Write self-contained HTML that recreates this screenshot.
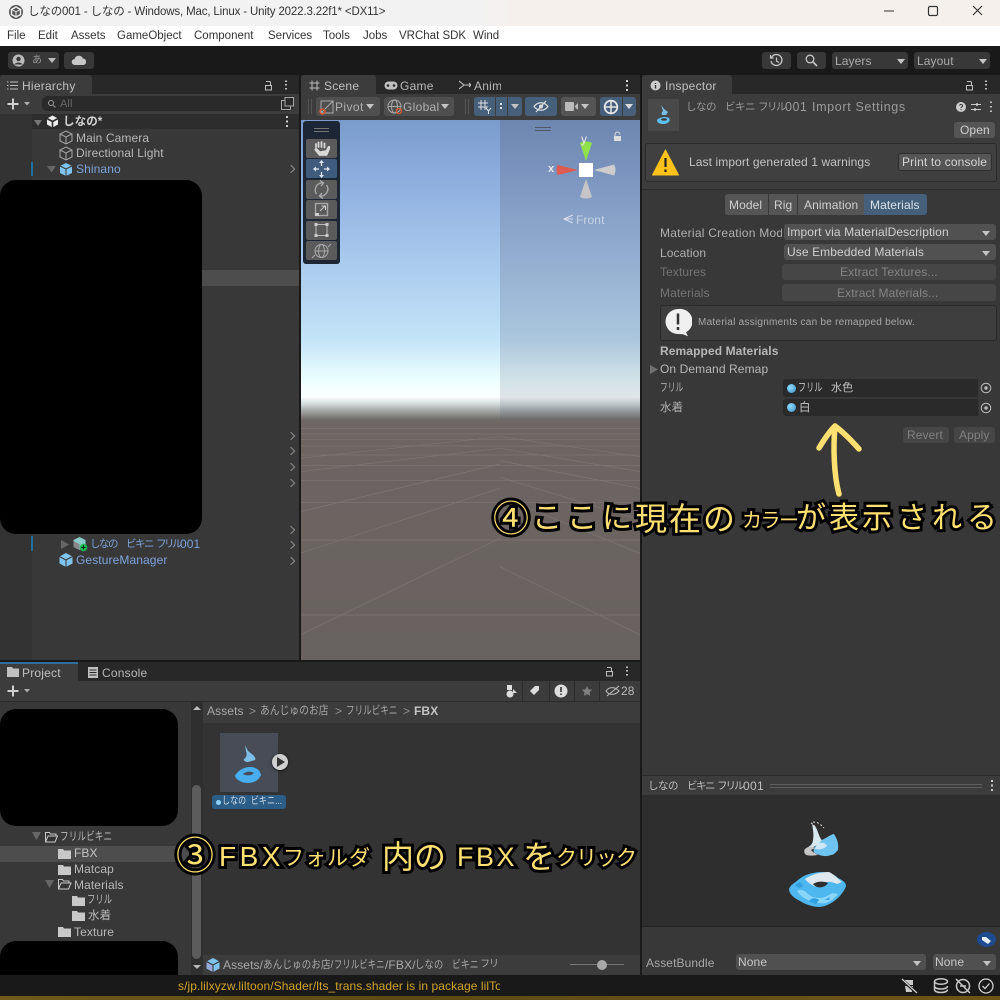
<!DOCTYPE html>
<html lang="ja"><head><meta charset="utf-8"><title>Unity</title>
<style>
html,body{margin:0;padding:0;background:#191919}
#r{position:relative;width:1000px;height:1000px;overflow:hidden;background:#191919;font-family:"Liberation Sans","Noto Sans CJK JP",sans-serif;font-size:12px;color:#c4c4c4}
#r div,#r span.t,#r svg.a{position:absolute}
.t{position:absolute;white-space:nowrap;line-height:16px;letter-spacing:.1px}
.n{transform-origin:0 50%}
.m{color:#333;font-size:11.5px;letter-spacing:0}
.b{background:#585858;border-radius:3px}
.tri{position:absolute;width:0;height:0;border-left:4px solid transparent;border-right:4px solid transparent;border-top:5px solid #c4c4c4}
.ann{position:absolute;white-space:nowrap;color:#ffe070;-webkit-text-stroke:6px #000;paint-order:stroke fill;stroke-linejoin:round;font-family:"Liberation Sans","Noto Sans CJK JP",sans-serif;line-height:40px}
.chev{position:absolute;left:288px;width:5px;height:5px;border-top:1.4px solid #8e8e8e;border-right:1.4px solid #8e8e8e;transform:rotate(45deg)}
.tool{position:absolute;left:306px;width:31px;height:19px;background:#5b5b5b;border-radius:2px}
</style></head><body><div id="r">

<!-- title bar -->
<div style="left:0;top:0;width:1000px;height:26px;background:linear-gradient(90deg,#f2f2f2 0,#f2f2f2 48%,#f6f0ec 52%,#f6f0ec 100%)"></div>
<svg class="a" style="left:8px;top:4px" width="16" height="16" viewBox="0 0 16 16"><circle cx="8" cy="8" r="7" fill="#555"/><path d="M8 3l4.500 2.500v5L8 13l-4.500-2.500v-5z" fill="none" stroke="#eee" stroke-width="1.500"/><path d="M8 8l4-2.500M8 8v5M8 8L4 5.500" stroke="#eee"/></svg>
<span class="t" style="left:28px;top:4px;color:#333;font-size:11.5px;letter-spacing:-.15px">しなの001 - しなの - Windows, Mac, Linux - Unity 2022.3.22f1* &lt;DX11&gt;</span>
<svg class="a" style="left:880px;top:0" width="120" height="24" viewBox="0 0 120 24"><path d="M4 11h10" stroke="#333" stroke-width="1"/><rect x="48.500" y="6.500" width="9" height="9" rx="1.500" fill="none" stroke="#333" stroke-width="1.200"/><path d="M93 6l9 9M102 6l-9 9" stroke="#333" stroke-width="1.200"/></svg>
<!-- menu bar -->
<div style="left:0;top:26px;width:1000px;height:20px;background:#fff"></div>
<span class="t m" style="left:7px;top:28px">File</span>
<span class="t m" style="left:38px;top:28px">Edit</span>
<span class="t m" style="left:71px;top:28px">Assets</span>
<span class="t m" style="left:117px;top:28px">GameObject</span>
<span class="t m" style="left:194px;top:28px">Component</span>
<span class="t m" style="left:268px;top:28px">Services</span>
<span class="t m" style="left:323px;top:28px">Tools</span>
<span class="t m" style="left:363px;top:28px">Jobs</span>
<span class="t m" style="left:399px;top:28px">VRChat SDK</span>
<span class="t m" style="left:473px;top:28px;width:27px;overflow:hidden">Wind</span>

<!-- toolbar -->
<div class="b" style="left:8px;top:52px;width:51px;height:17px;background:#383838"></div>
<svg class="a" style="left:12px;top:54px" width="13" height="13" viewBox="0 0 13 13"><circle cx="6.500" cy="6.500" r="6" fill="#bbb"/><circle cx="6.500" cy="5" r="2.200" fill="#383838"/><path d="M2.500 10.500c1-2.500 7-2.500 8 0" fill="#383838"/></svg>
<span class="t" style="left:32px;top:53px;font-size:10px;color:#999">あ</span>
<div class="tri" style="left:48px;top:58px;border-top-color:#bbb"></div>
<div class="b" style="left:64px;top:52px;width:30px;height:17px;background:#383838"></div>
<svg class="a" style="left:71px;top:54px" width="16" height="12" viewBox="0 0 16 12"><path d="M4 11a3 3 0 0 1-.5-6A4.500 4.500 0 0 1 12 4.500 3.300 3.300 0 0 1 12.500 11z" fill="#c8c8c8"/></svg>
<div class="b" style="left:762px;top:52px;width:29px;height:17px;background:#383838"></div>
<svg class="a" style="left:769px;top:53px" width="15" height="15" viewBox="0 0 15 15"><path d="M2.500 4.500A5.500 5.500 0 1 1 2 8" fill="none" stroke="#c8c8c8" stroke-width="1.300"/><path d="M1.500 2v3h3M7.500 4.500V8l2.500 1.500" fill="none" stroke="#c8c8c8" stroke-width="1.200"/></svg>
<div class="b" style="left:797px;top:52px;width:29px;height:17px;background:#383838"></div>
<svg class="a" style="left:805px;top:54px" width="13" height="13" viewBox="0 0 13 13"><circle cx="5" cy="5" r="3.800" fill="none" stroke="#c8c8c8" stroke-width="1.300"/><path d="M8 8l4 4" stroke="#c8c8c8" stroke-width="1.600"/></svg>
<div class="b" style="left:832px;top:52px;width:76px;height:17px;background:#383838"></div>
<span class="t" style="left:835px;top:53px;color:#aaa">Layers</span><div class="tri" style="left:897px;top:59px"></div>
<div class="b" style="left:914px;top:52px;width:76px;height:17px;background:#383838"></div>
<span class="t" style="left:917px;top:53px;color:#aaa">Layout</span><div class="tri" style="left:979px;top:59px"></div>

<!-- HIERARCHY -->
<div style="left:0;top:75px;width:299px;height:585px;background:#383838"></div>
<div style="left:0;top:75px;width:299px;height:19px;background:#282828;"></div>
<div style="left:0;top:75px;width:92px;height:19px;background:#3c3c3c;border-radius:3px 3px 0 0"></div>
<svg class="a" style="left:7px;top:81px" width="11" height="9" viewBox="0 0 11 9"><path d="M0 1h1.500M3 1h8M0 4.500h1.500M3 4.500h8M0 8h1.500M3 8h8" stroke="#bbb"/></svg>
<span class="t" style="left:22px;top:78px;color:#c0c0c0;letter-spacing:.25px">Hierarchy</span>
<svg class="a" style="left:263px;top:79px" width="30" height="12" viewBox="0 0 30 12"><path d="M3 2.500h3.500a1 1 0 0 1 1 1V6M2.500 6.500h6v4.500h-6z" fill="none" stroke="#c0c0c0"/><path d="M23 1.500v1.500M23 5v1.500M23 9v1.500" stroke="#c0c0c0" stroke-width="2"/></svg>
<div style="left:0;top:94px;width:299px;height:21px;background:#3c3c3c;border-bottom:1px solid #2a2a2a"></div>
<svg class="a" style="left:6px;top:97px" width="26" height="14" viewBox="0 0 26 14"><path d="M7 1.500v11M1.500 7h11" stroke="#d0d0d0" stroke-width="2"/><path d="M18 5h6l-3 3.500z" fill="#b0b0b0"/></svg>
<div style="left:42px;top:96px;width:252px;height:15px;background:#2a2a2a;border-radius:5px"></div>
<svg class="a" style="left:47px;top:99px" width="10" height="10" viewBox="0 0 10 10"><circle cx="4" cy="4" r="2.500" fill="none" stroke="#999"/><path d="M6 6l2.500 2.500" stroke="#999"/></svg>
<span class="t" style="left:60px;top:96px;font-size:11px;color:#666">All</span>
<svg class="a" style="left:281px;top:97px" width="13" height="13" viewBox="0 0 13 13"><rect x=".5" y="3.500" width="9" height="9" fill="none" stroke="#aaa"/><rect x="4" y=".5" width="8.500" height="8.500" fill="#2a2a2a" stroke="#aaa"/></svg>
<!-- scene row -->
<div style="left:32px;top:114px;width:267px;height:15px;background:#2d2d2d"></div>
<div style="left:0;top:114px;width:32px;height:546px;background:#333"></div>
<div style="left:202px;top:270px;width:97px;height:16px;background:#4d4d4d"></div>
<svg class="a" style="left:34px;top:119px" width="8" height="8" viewBox="0 0 8 8"><path d="M0 1h8L4 7z" fill="#777"/></svg>
<svg class="a" style="left:46px;top:115px" width="13" height="13" viewBox="0 0 13 13"><path d="M6.500 .5l5.500 3v6l-5.500 3-5.500-3v-6z" fill="#eee"/><path d="M6.500 6.500v6M6.500 6.500L1 3.500M6.500 6.500l5.500-3" stroke="#2d2d2d" stroke-width="1.600"/></svg>
<span class="t" style="left:63px;top:114px;color:#d4d4d4;font-weight:bold;font-size:11.5px">しなの*</span>
<svg class="a" style="left:285px;top:115px" width="4" height="13" viewBox="0 0 4 13"><path d="M2 1v2M2 5.500v2M2 10v2" stroke="#ccc" stroke-width="2"/></svg>
<svg class="a" style="left:59px;top:130px" width="14" height="46" viewBox="0 0 14 46"><g fill="none" stroke="#a8a8a8"><path d="M7 1l6 3v7l-6 3-6-3V4zM1 4l6 3 6-3M7 7v7"/><path d="M7 17l6 3v7l-6 3-6-3v-7zM1 20l6 3 6-3M7 23v7"/></g><path d="M7 33l6 3v7l-6 3-6-3v-7z" fill="#7fc4ee"/><path d="M1 36l6 3 6-3M7 39v7" stroke="#383838" fill="none"/></svg>
<span class="t" style="left:76px;top:130px;color:#b8b8b8">Main Camera</span>
<span class="t" style="left:76px;top:145px;color:#b8b8b8">Directional Light</span>
<div style="left:31px;top:162px;width:2px;height:14px;background:#1f6f9f"></div>
<svg class="a" style="left:47px;top:165px" width="9" height="8" viewBox="0 0 9 8"><path d="M0 1h9L4.500 7.500z" fill="#666"/></svg>
<span class="t" style="left:76px;top:161px;color:#7ba3dc">Shinano</span>
<div class="chev" style="top:166px"></div>
<div class="chev" style="top:433px"></div>
<div class="chev" style="top:448px"></div>
<div class="chev" style="top:464px"></div>
<div class="chev" style="top:480px"></div>
<div class="chev" style="top:527px"></div>
<div class="chev" style="top:542px"></div>
<div class="chev" style="top:558px"></div>
<div style="left:31px;top:536px;width:2px;height:15px;background:#1f6f9f"></div>
<svg class="a" style="left:61px;top:540px" width="8" height="9" viewBox="0 0 8 9"><path d="M0 0l8 4.500L0 9z" fill="#666"/></svg>
<svg class="a" style="left:73px;top:536px" width="15" height="16" viewBox="0 0 15 16"><path d="M6.500 1l6 3v7l-6 3-6-3V4z" fill="#8cc"/><path d="M.5 5l6 3v6l-6-3z" fill="#888"/><circle cx="10.500" cy="11.500" r="3.800" fill="#1db954"/><path d="M10.500 9.500v4M8.500 11.500h4" stroke="#111"/></svg>
<span class="t" style="left:90px;top:536px;color:#7ba3dc;font-size:10.500px;letter-spacing:-1.500px">しなの</span>
<span class="t" style="left:126px;top:536px;color:#7ba3dc;font-size:10.500px;letter-spacing:-1.500px">ビキニ</span>
<span class="t" style="left:156px;top:536px;color:#7ba3dc;font-size:10.500px;letter-spacing:-2.500px">フリル</span>
<span class="t" style="left:180px;top:536px;color:#7ba3dc">001</span>
<svg class="a" style="left:59px;top:552px" width="14" height="16" viewBox="0 0 14 16"><path d="M7 1l6.500 3.500v7L7 15 .5 11.500v-7z" fill="#7fc4ee"/><path d="M.5 4.500L7 8l6.500-3.500M7 8v7" stroke="#383838" fill="none"/></svg>
<span class="t" style="left:76px;top:552px;color:#7ba3dc">GestureManager</span>
<div style="left:0;top:180px;width:202px;height:354px;background:#000;border-radius:16px"></div>

<!-- SCENE -->
<div style="left:301px;top:75px;width:339px;height:19px;background:#282828"></div>
<div style="left:301px;top:75px;width:75px;height:19px;background:#3c3c3c;border-radius:3px 3px 0 0"></div>
<svg class="a" style="left:309px;top:80px" width="11" height="11" viewBox="0 0 11 11"><path d="M3 .5v10M8 .5v10M.5 3h10M.5 8h10" stroke="#bbb"/></svg>
<span class="t" style="left:324px;top:78px;color:#c0c0c0;letter-spacing:.25px">Scene</span>
<svg class="a" style="left:384px;top:81px" width="14" height="9" viewBox="0 0 14 9"><rect x=".5" y=".5" width="13" height="8" rx="4" fill="#c0c0c0"/><circle cx="4" cy="4.500" r="1.300" fill="#282828"/><circle cx="10" cy="4.500" r="1.300" fill="#282828"/></svg>
<span class="t" style="left:400px;top:78px;color:#b8b8b8;letter-spacing:.25px">Game</span>
<svg class="a" style="left:459px;top:80px" width="12" height="10" viewBox="0 0 12 10"><path d="M0 1l5 4-5 4M5 5h7M10 3l2 2-2 2" fill="none" stroke="#c0c0c0" stroke-width="1.100"/></svg>
<span class="t" style="left:474px;top:78px;color:#b8b8b8;letter-spacing:.25px;width:27px;overflow:hidden">Anim</span>
<svg class="a" style="left:625px;top:79px" width="4" height="13" viewBox="0 0 4 13"><path d="M2 1v2M2 5.500v2M2 10v2" stroke="#ccc" stroke-width="2"/></svg>
<div style="left:301px;top:94px;width:339px;height:26px;background:#3c3c3c"></div>
<div style="left:308px;top:99px;width:1px;height:15px;background:#555;box-shadow:3px 0 0 #555"></div>
<div style="left:316px;top:97px;width:64px;height:19px;background:#4f4f4f;border-radius:3px"></div>
<svg class="a" style="left:319px;top:99px" width="16" height="16" viewBox="0 0 16 16"><path d="M2 2h12v12H2zM2 14L14 2" fill="none" stroke="#aaa"/><circle cx="3.500" cy="12.500" r="2.500" fill="none" stroke="#e2572a" stroke-width="1.300"/></svg>
<span class="t" style="left:335px;top:99px;color:#b0b0b0;letter-spacing:.4px">Pivot</span><div class="tri" style="left:366px;top:104px"></div>
<div style="left:384px;top:97px;width:70px;height:19px;background:#4f4f4f;border-radius:3px"></div>
<svg class="a" style="left:387px;top:99px" width="16" height="16" viewBox="0 0 16 16"><g fill="none" stroke="#aaa"><circle cx="7.500" cy="7.500" r="6.500"/><ellipse cx="7.500" cy="7.500" rx="3" ry="6.500"/><path d="M1 7.500h13"/></g><circle cx="12" cy="12" r="2.500" fill="none" stroke="#e2572a" stroke-width="1.300"/></svg>
<span class="t" style="left:403px;top:99px;color:#b0b0b0;letter-spacing:.3px">Global</span><div class="tri" style="left:441px;top:104px"></div>
<div style="left:465px;top:99px;width:1px;height:15px;background:#555;box-shadow:3px 0 0 #555"></div>
<div style="left:474px;top:97px;width:21px;height:19px;background:#46607c;border-radius:3px 0 0 3px"></div>
<svg class="a" style="left:477px;top:99px" width="15" height="15" viewBox="0 0 15 15"><path d="M4 1v10M8 1v10M1 4h10M1 8h10M9 9l2.500 3L14 9M11.500 12v3" fill="none" stroke="#e0e0e0"/></svg>
<div style="left:496px;top:97px;width:11px;height:19px;background:#46607c"></div>
<div style="left:500px;top:103px;width:1.500px;height:1.500px;background:#ddd;box-shadow:0 4px 0 #ddd"></div>
<div style="left:508px;top:97px;width:14px;height:19px;background:#46607c;border-radius:0 3px 3px 0"></div><div class="tri" style="left:511px;top:104px"></div>
<div style="left:525px;top:97px;width:32px;height:19px;background:#46607c;border-radius:3px"></div>
<svg class="a" style="left:533px;top:100px" width="16" height="13" viewBox="0 0 16 13"><path d="M1 6.500c4-5 10-5 14 0-4 5-10 5-14 0z" fill="none" stroke="#ddd" stroke-width="1.200"/><circle cx="8" cy="6.500" r="2" fill="#ddd"/><path d="M3 12L13 1" stroke="#ddd" stroke-width="1.200"/></svg>
<div style="left:561px;top:97px;width:35px;height:19px;background:#555;border-radius:3px"></div>
<svg class="a" style="left:565px;top:102px" width="13" height="9" viewBox="0 0 13 9"><rect width="9" height="9" rx="1" fill="#bbb"/><path d="M9.500 4.500L13 1v7z" fill="#bbb"/></svg><div class="tri" style="left:581px;top:104px"></div>
<div style="left:600px;top:97px;width:22px;height:19px;background:#46607c;border-radius:3px 0 0 3px"></div>
<svg class="a" style="left:603px;top:99px" width="16" height="16" viewBox="0 0 16 16"><circle cx="8" cy="8" r="6.300" fill="none" stroke="#e6e6e6" stroke-width="1.800"/><path d="M1.500 8h13M8 1.500v13" stroke="#e6e6e6" stroke-width="1.500"/></svg>
<div style="left:623px;top:97px;width:13px;height:19px;background:#46607c;border-radius:0 3px 3px 0"></div><div class="tri" style="left:625px;top:104px;border-top-color:#ddd"></div>
<!-- viewport -->
<div style="left:301px;top:120px;width:339px;height:540px;background:linear-gradient(180deg,#7a9ccc 0,#8aabdc 50px,#a6c6ec 130px,#c4e4f8 220px,#ecffff 260px,#fbffff 277px,#d8e0e0 283px,#a8acab 290px,#6f6866 300px,#6d6562 320px,#686260 540px)"></div>
<div style="left:500px;top:120px;width:140px;height:300px;background:linear-gradient(180deg,rgba(70,70,90,.25),rgba(70,80,110,.2) 70%,rgba(70,80,100,.13))"></div>
<svg class="a" style="left:300px;top:340px" width="340" height="320" viewBox="0 0 1020 960"><g stroke="#7d7673" stroke-width="2" fill="none"><path d="M0 265H1020M0 282H1020M0 298H1020M0 318H1020M0 345H1020M0 376H1020M0 421H1020M0 488H1020M0 600H1020M0 825H1020"/><path d="M600 325L0 395M600 372L0 515M600 445L0 640M600 595L0 885M600 325L1020 395M600 362L1020 445M600 412L1020 540M600 680L1020 885M600 290L0 355M600 290L1020 350M600 470L1020 640"/></g></svg>
<!-- tools -->
<div style="left:303px;top:121px;width:37px;height:143px;background:#1d2635;border-radius:3px"></div>
<div style="left:314px;top:128px;width:15px;height:1px;background:#777;box-shadow:0 3px 0 #777"></div>
<div class="tool" style="top:139px;"></div><div class="tool" style="top:159px;background:#3f5b7d"></div><div class="tool" style="top:180px"></div><div class="tool" style="top:200px"></div><div class="tool" style="top:221px"></div><div class="tool" style="top:241px"></div>
<svg class="a" style="left:306px;top:139px" width="31" height="122" viewBox="0 0 31 122"><path d="M10 8V5M12.500 8V3.500M15.500 8V3M18.500 8.500V4.500M21 11L22.500 8c1-1 .8 1 .5 2l-2.500 6h-7l-4-5c-.5-1 .5-1.500 1.500-.5l2 2" fill="#d8d8d8" stroke="#d8d8d8" stroke-width="1.800" stroke-linecap="round" stroke-linejoin="round"/><g fill="none" stroke="#e8e8e8" stroke-width="1.200"><path d="M15.500 23v4M15.500 33v4M9 30h4M18 30h4"/></g><path d="M15.500 21l2.500 3h-5zM15.500 39l2.500-3h-5zM7 30l3-2.500v5zM24 30l-3-2.500v5z" fill="#dfe8f0"/><g fill="none" stroke="#a8a8a8" stroke-width="1.400"><path d="M10.500 55A7 7 0 0 1 17 44M14 41.500l3.500 2.500-2.500 3M20.500 46A7 7 0 0 1 14 57M17 59.500l-3.500-2.500 2.500-3"/><rect x="9.500" y="64.500" width="12" height="12"/></g><rect x="9" y="74" width="4" height="3" fill="#ccc"/><path d="M14 72l5-5M15.500 67H19.500v4" fill="none" stroke="#ccc"/><g fill="none" stroke="#bbb"><rect x="10" y="85.500" width="11" height="11"/></g><path d="M8.500 84h3v3h-3zM19.500 84h3v3h-3zM8.500 95h3v3h-3zM19.500 95h3v3h-3z" fill="#ccc"/><g fill="none" stroke="#aaa"><circle cx="15.500" cy="112" r="6.500"/><ellipse cx="15.500" cy="112" rx="3" ry="6.500"/><path d="M9 112h13"/><path d="M6 119l3-3M25 105l-3 3"/></g></svg>
<!-- gizmo -->
<svg class="a" style="left:530px;top:122px" width="100" height="20" viewBox="0 0 100 20"><path d="M5 5.500h16M5 8.500h16" stroke="#444" opacity=".7"/><rect x="84" y="14" width="7" height="5" fill="#ddd"/><path d="M85 14V12.500a2.500 2.500 0 0 1 5 0" fill="none" stroke="#ddd"/></svg>
<svg class="a" style="left:540px;top:130px" width="90" height="80" viewBox="0 0 90 80"><path d="M46 31L40 13c3-2 9-2 12 0z" fill="#8fe24b"/><path d="M46 49L52 67c-3 2-9 2-12 0z" fill="#c6c6c6"/><path d="M38 40L18 35c-2 3-2 7 0 10z" fill="#dd5b50"/><path d="M54 40L74 34.500c2 3 2 8 0 11z" fill="#cdcdcd"/><rect x="39" y="33" width="14" height="14" fill="#fff"/></svg>
<span class="t" style="left:581px;top:131px;color:#e8e8e8;font-size:12px">y</span>
<span class="t" style="left:548px;top:161px;color:#e8e8e8;font-size:11px;font-weight:bold">x</span>
<svg class="a" style="left:563px;top:214px" width="11" height="10" viewBox="0 0 11 10"><path d="M10 1L1 5l9 4M1 5h9" fill="none" stroke="#dde"/></svg>
<span class="t" style="left:576px;top:212px;color:#c6d4e6">Front</span>

<!-- INSPECTOR -->
<div style="left:642px;top:75px;width:358px;height:900px;background:#383838"></div>
<div style="left:642px;top:75px;width:358px;height:19px;background:#282828"></div>
<div style="left:642px;top:75px;width:90px;height:19px;background:#3c3c3c;border-radius:3px 3px 0 0"></div>
<svg class="a" style="left:650px;top:80px" width="11" height="11" viewBox="0 0 11 11"><circle cx="5.500" cy="5.500" r="5" fill="#ccc"/><path d="M5.500 3v1M5.500 5v3.500" stroke="#333" stroke-width="1.300"/></svg>
<span class="t" style="left:665px;top:78px;color:#c0c0c0;letter-spacing:.25px">Inspector</span>
<svg class="a" style="left:964px;top:79px" width="30" height="12" viewBox="0 0 30 12"><path d="M3 2.500h3.500a1 1 0 0 1 1 1V6M2.500 6.500h6v4.500h-6z" fill="none" stroke="#c0c0c0"/><path d="M22 1.500v1.500M22 5v1.500M22 9v1.500" stroke="#c0c0c0" stroke-width="2"/></svg>
<div style="left:642px;top:94px;width:358px;height:96px;background:#3c3c3c"></div>
<div style="left:648px;top:99px;width:31px;height:32px;background:#494949"></div>
<svg class="a" style="left:652px;top:103px" width="24" height="25" viewBox="0 0 24 25"><path d="M9 2l3 4 4 3-2 3h-4c-1-2 0-3 1-4z" fill="#78bde6"/><path d="M5 17c2-3 9-4 12-2 2 3-1 6-6 6-3 0-6-1-6-4z" fill="#5fbdf0"/><ellipse cx="12" cy="16.500" rx="3" ry="1.200" fill="#3c3c3c"/></svg>
<span class="t" style="left:686px;top:99px;color:#9a9a9a;font-size:10.500px;letter-spacing:-.5px">しなの</span>
<span class="t" style="left:725px;top:99px;color:#9a9a9a;font-size:10.500px;letter-spacing:-.5px">ビキニ</span>
<span class="t" style="left:758px;top:99px;color:#9a9a9a;font-size:10.500px;letter-spacing:-1.500px">フリル</span>
<span class="t" style="left:785px;top:99px;color:#9a9a9a;font-size:12.500px;letter-spacing:.5px">001</span>
<span class="t" style="left:812px;top:99px;color:#9a9a9a;font-size:12.500px;letter-spacing:.65px">Import Settings</span>
<svg class="a" style="left:955px;top:100px" width="41" height="14" viewBox="0 0 41 14"><circle cx="6" cy="7" r="5" fill="#ccc"/><path d="M4.500 5.500C5 4 8 4.200 7.500 6c-.3 1-1.500 1-1.500 2.300M6 9.300v1" fill="none" stroke="#333"/><path d="M16 4.500h10M16 9.500h10" stroke="#ccc"/><path d="M22 3v3M20 8v3" stroke="#ccc" stroke-width="1.500"/><path d="M36 1.500v1.500M36 6v1.500M36 10.500V12" stroke="#ccc" stroke-width="1.800"/></svg>
<div style="left:954px;top:122px;width:41px;height:16px;background:#555;border-radius:3px"></div>
<span class="t" style="left:960px;top:122px;color:#d0d0d0">Open</span>
<!-- warning -->
<div style="left:645px;top:143px;width:350px;height:37px;background:#404040;border:1px solid #2b2b2b;border-radius:3px"></div>
<svg class="a" style="left:652px;top:149px" width="27" height="27" viewBox="0 0 27 27"><path d="M13.500 1L26.500 26H.5z" fill="#fcc21b" stroke="#fcc21b" stroke-linejoin="round"/><path d="M13.500 9v9M13.500 20.500v2.500" stroke="#222" stroke-width="2.200"/></svg>
<span class="t" style="left:689px;top:154px;color:#c4c4c4">Last import generated 1 warnings</span>
<div style="left:899px;top:154px;width:92px;height:16px;background:#555;border-radius:2px;box-shadow:0 0 0 1px #2e2e2e"></div>
<span class="t" style="left:902px;top:154px;color:#d4d4d4;letter-spacing:.15px">Print to console</span>
<div style="left:642px;top:189px;width:358px;height:1px;background:#2d2d2d"></div>
<!-- tabs -->
<div style="left:725px;top:194px;width:43px;height:21px;background:#555;border-radius:3px 0 0 3px"></div>
<div style="left:769px;top:194px;width:28px;height:21px;background:#555"></div>
<div style="left:798px;top:194px;width:66px;height:21px;background:#555"></div>
<div style="left:864px;top:194px;width:63px;height:21px;background:#46607c;border-radius:0 3px 3px 0"></div>
<span class="t" style="left:729px;top:197px;color:#d0d0d0">Model</span>
<span class="t" style="left:774px;top:197px;color:#d0d0d0">Rig</span>
<span class="t" style="left:804px;top:197px;color:#d0d0d0">Animation</span>
<span class="t" style="left:870px;top:197px;color:#d8e0ea">Materials</span>
<!-- fields -->
<span class="t" style="left:660px;top:225px;color:#b0b0b0;width:122px;overflow:hidden;letter-spacing:.25px">Material Creation Mode</span>
<div class="b" style="left:784px;top:224px;width:212px;height:16px;background:#515151"></div>
<span class="t" style="left:787px;top:224px;color:#cfcfcf">Import via MaterialDescription</span><div class="tri" style="left:982px;top:231px"></div>
<span class="t" style="left:660px;top:245px;color:#b0b0b0">Location</span>
<div class="b" style="left:784px;top:244px;width:212px;height:16px;background:#515151"></div>
<span class="t" style="left:787px;top:244px;color:#cfcfcf">Use Embedded Materials</span><div class="tri" style="left:982px;top:251px"></div>
<span class="t" style="left:660px;top:264px;color:#747474">Textures</span>
<div class="b" style="left:782px;top:264px;width:214px;height:16px;background:#464646"></div>
<span class="t" style="left:840px;top:264px;color:#848484">Extract Textures...</span>
<span class="t" style="left:660px;top:285px;color:#747474">Materials</span>
<div class="b" style="left:782px;top:284px;width:214px;height:17px;background:#464646"></div>
<span class="t" style="left:837px;top:285px;color:#848484">Extract Materials...</span>
<div style="left:660px;top:305px;width:335px;height:34px;background:#3e3e3e;border:1px solid #2a2a2a;border-radius:3px"></div>
<svg class="a" style="left:665px;top:308px" width="27" height="29" viewBox="0 0 27 29"><path d="M13 1a12.500 12.500 0 1 0 0 25l5 .3 5 2-2-4A12.500 12.500 0 0 0 13 1z" fill="#f0f0f0"/><path d="M13 5.500v11M13 19v3" stroke="#333" stroke-width="2.500"/></svg>
<span class="t" style="left:698px;top:315px;color:#a8a8a8;font-size:10px;letter-spacing:.25px">Material assignments can be remapped below.</span>
<span class="t" style="left:660px;top:343px;color:#b8b8b8;font-weight:bold;font-size:12px;letter-spacing:.1px">Remapped Materials</span>
<svg class="a" style="left:650px;top:365px" width="8" height="9" viewBox="0 0 8 9"><path d="M0 0l8 4.500L0 9z" fill="#707070"/></svg>
<span class="t" style="left:660px;top:361px;color:#b8b8b8">On Demand Remap</span>
<span class="t n" style="left:660px;top:380px;color:#b0b0b0;font-size:11.500px;transform:scaleX(.67)">フリル</span>
<div style="left:783px;top:379px;width:213px;height:18px;background:#2a2a2a;border-radius:3px"></div>
<div style="left:978px;top:379px;width:18px;height:18px;background:#383838;border-radius:0 3px 3px 0"></div>
<div style="left:787px;top:384px;width:9px;height:9px;border-radius:50%;background:radial-gradient(circle at 35% 35%,#8fdcff,#3a8fc8)"></div>
<span class="t n" style="left:798px;top:380px;color:#c4c4c4;font-size:11.500px;transform:scaleX(.7)">フリル</span>
<span class="t" style="left:831px;top:380px;color:#c4c4c4;font-size:11px">水色</span>
<svg class="a" style="left:980px;top:382px" width="12" height="12" viewBox="0 0 12 12"><circle cx="6" cy="6" r="4.800" fill="none" stroke="#bbb"/><circle cx="6" cy="6" r="1.700" fill="#bbb"/></svg>
<span class="t" style="left:660px;top:400px;color:#b0b0b0;font-size:11.500px">水着</span>
<div style="left:783px;top:399px;width:213px;height:17px;background:#2a2a2a;border-radius:3px"></div>
<div style="left:978px;top:399px;width:18px;height:17px;background:#383838;border-radius:0 3px 3px 0"></div>
<div style="left:787px;top:403px;width:9px;height:9px;border-radius:50%;background:radial-gradient(circle at 35% 35%,#8fdcff,#3a8fc8)"></div>
<span class="t" style="left:799px;top:400px;color:#c4c4c4;font-size:11.500px">白</span>
<svg class="a" style="left:980px;top:402px" width="12" height="12" viewBox="0 0 12 12"><circle cx="6" cy="6" r="4.800" fill="none" stroke="#bbb"/><circle cx="6" cy="6" r="1.700" fill="#bbb"/></svg>
<div class="b" style="left:903px;top:427px;width:46px;height:16px;background:#464646"></div>
<span class="t" style="left:907px;top:427px;color:#808080">Revert</span>
<div class="b" style="left:954px;top:427px;width:41px;height:16px;background:#464646"></div>
<span class="t" style="left:959px;top:427px;color:#808080">Apply</span>
<!-- preview -->
<div style="left:642px;top:775px;width:358px;height:1px;background:#2a2a2a"></div>
<div style="left:642px;top:776px;width:358px;height:19px;background:#3c3c3c"></div>
<span class="t" style="left:648px;top:778px;color:#bebebe;font-size:10.500px;letter-spacing:-.5px">しなの</span>
<span class="t" style="left:687px;top:778px;color:#bebebe;font-size:10.500px;letter-spacing:-1.500px">ビキニ</span>
<span class="t" style="left:717px;top:778px;color:#bebebe;font-size:10.500px;letter-spacing:-2px">フリル</span>
<span class="t" style="left:743px;top:778px;color:#bebebe;letter-spacing:.3px">001</span>
<div style="left:770px;top:784px;width:212px;height:1px;background:#5e5e5e;box-shadow:0 3px 0 #5e5e5e"></div>
<svg class="a" style="left:990px;top:779px" width="4" height="13" viewBox="0 0 4 13"><path d="M2 1v2M2 5.500v2M2 10v2" stroke="#ccc" stroke-width="2"/></svg>
<div style="left:642px;top:795px;width:358px;height:131px;background:#2e2e2e;border-bottom:1px solid #232323"></div>
<svg class="a" style="left:785px;top:818px" width="64" height="92" viewBox="0 0 64 92"><path d="M27 6c4 2 5 6 7 11 1 3 3 5 3 6l-5 4c-4 2-5 4-10 3l4-3c3-3 3-12 1-21z" fill="#d8e8f2"/><path d="M28 4c6 0 8 3 11 6M26 5c3 1 6 6 7 12" fill="none" stroke="#ddd" stroke-dasharray="2 2"/><path d="M37 22c4-2 10-6 12-6 3 5 5 9 4 16-2 2-4 5-7 5-5 2-10 1-14-1-4 0-5-6 0-9z" fill="#6ec3f0"/><path d="M32 26c3-2 8-2 10 2-3 3-7 4-12 3z" fill="#cfe6f4"/><path d="M20 31c3-3 7-3 10-1l-4 2c2 2 3 3 7 5-7 1-11 1-13-1-1-2-1-4 0-5z" fill="#c6c6c6"/><path d="M4 71c2-5 6-6 9-9 6-5 12-7 22-8 8 0 14 2 18 6 4 2 8 4 8 8-1 4-4 7-6 10-7 7-13 10-20 11-8 0-15-3-20-6-6-3-11-7-11-12z" fill="#4db7ee"/><path d="M20 61c6-4 14-7 24-7 6 3 9 7 13 10l-5 2c-4-2-9-3-14-1-4 1-6 5-9 3-3-2-6-3-9-7z" fill="#dfe8ee"/><path d="M28 66c4-3 11-3 15-1-2 4-10 7-15 1z" fill="#2e2e2e"/><path d="M12 73c3-2 6-1 9 1 3 4 8 6 14 6 5 0 8-3 13-5l5 1c-2 3-6 7-12 9-7 1-14-1-20-4-4-2-7-5-9-8z" fill="#8ad6fa"/><path d="M24 83c3-4 7-3 10-1l-3 4zM40 82l5-3-1 3zM10 67l5-3 3 4-4 2z" fill="#2f9fe0"/></svg>
<svg class="a" style="left:977px;top:931px" width="19" height="17" viewBox="0 0 19 17"><ellipse cx="9.500" cy="8.500" rx="9.500" ry="7.500" fill="#1d4a90"/><path d="M5 6h4l5 4-3 3-6-4z" fill="#e8eef8"/></svg>
<span class="t" style="left:646px;top:955px;color:#a8a8a8">AssetBundle</span>
<div class="b" style="left:736px;top:954px;width:190px;height:16px;background:#505050"></div>
<span class="t" style="left:738px;top:954px;color:#c8c8c8">None</span><div class="tri" style="left:913px;top:961px"></div>
<div class="b" style="left:933px;top:954px;width:63px;height:16px;background:#505050"></div>
<span class="t" style="left:935px;top:954px;color:#c8c8c8">None</span><div class="tri" style="left:983px;top:961px"></div>

<!-- PROJECT -->
<div style="left:0;top:662px;width:640px;height:313px;background:#333"></div>
<div style="left:0;top:662px;width:640px;height:19px;background:#282828"></div>
<div style="left:0;top:662px;width:78px;height:19px;background:#3c3c3c;border-top:2px solid #2f6f9f;box-sizing:border-box"></div>
<svg class="a" style="left:7px;top:667px" width="12" height="10" viewBox="0 0 12 10"><path d="M0 0h5l1 1.500h6V10H0z" fill="#c0c0c0"/></svg>
<span class="t" style="left:22px;top:665px;color:#c0c0c0;letter-spacing:.2px">Project</span>
<svg class="a" style="left:88px;top:667px" width="10" height="11" viewBox="0 0 10 11"><rect width="10" height="11" fill="#c0c0c0"/><path d="M1.500 3h7M1.500 5.500h7M1.500 8h7" stroke="#282828"/></svg>
<span class="t" style="left:102px;top:665px;color:#b8b8b8;letter-spacing:.2px">Console</span>
<svg class="a" style="left:604px;top:665px" width="30" height="12" viewBox="0 0 30 12"><path d="M3 2.500h3.500a1 1 0 0 1 1 1V6M2.500 6.500h6v4.500h-6z" fill="none" stroke="#c0c0c0"/><path d="M23 1.500v1.500M23 5v1.500M23 9v1.500" stroke="#c0c0c0" stroke-width="2"/></svg>
<div style="left:0;top:681px;width:640px;height:20px;background:#3c3c3c;border-bottom:1px solid #2a2a2a"></div>
<svg class="a" style="left:6px;top:684px" width="26" height="14" viewBox="0 0 26 14"><path d="M7 1.500v11M1.500 7h11" stroke="#d0d0d0" stroke-width="2"/><path d="M18 5h6l-3 3.500z" fill="#b0b0b0"/></svg>
<svg class="a" style="left:504px;top:682px" width="135" height="18" viewBox="0 0 135 18"><path d="M3 3h5v5H3z" fill="#ddd"/><circle cx="6" cy="12" r="3.500" fill="#ddd"/><path d="M9 7l4 4H9z" fill="#ddd"/><path d="M26 9l5-5h4v4l-5 5z" fill="#ddd"/><circle cx="57" cy="9" r="6.500" fill="#ddd"/><path d="M57 5v5M57 11.500v1.500" stroke="#333" stroke-width="1.600"/><path d="M83 4l1.600 3.400 3.600.4-2.700 2.500.8 3.700-3.300-1.900-3.300 1.900.8-3.700-2.700-2.500 3.600-.4z" fill="#808080"/><path d="M102 9c3-4.500 9-4.500 13 0-4 4.500-10 4.500-13 0zM103 14l12-10" fill="none" stroke="#bbb" stroke-width="1.100"/></svg>
<div style="left:522px;top:681px;width:1px;height:20px;background:#2c2c2c;box-shadow:27px 0 0 #2c2c2c,52px 0 0 #2c2c2c,77px 0 0 #2c2c2c"></div>
<span class="t" style="left:621px;top:683px;color:#b8b8b8;font-size:12px">28</span>
<!-- tree -->
<div style="left:0;top:702px;width:191px;height:273px;background:#383838"></div>
<div style="left:0;top:846px;width:191px;height:16px;background:#4d4d4d"></div>
<div style="left:191px;top:702px;width:12px;height:273px;background:#2f2f2f"></div>
<div style="left:192px;top:785px;width:9px;height:174px;background:#5c5c5c;border-radius:5px"></div>
<svg class="a" style="left:192px;top:705px" width="10" height="6" viewBox="0 0 10 6"><path d="M1 5h8L5 1z" fill="#bbb"/></svg>
<svg class="a" style="left:192px;top:964px" width="10" height="6" viewBox="0 0 10 6"><path d="M1 1h8L5 5z" fill="#bbb"/></svg>
<svg class="a" style="left:32px;top:832px" width="9" height="8" viewBox="0 0 9 8"><path d="M0 0h9L4.500 8z" fill="#666"/></svg>
<svg class="a" style="left:45px;top:832px" width="13" height="11" viewBox="0 0 13 11"><path d="M.5 10V.5h4l1 1.500H11v2M.5 10l2.500-6h9.500L10 10z" fill="#333" stroke="#c8c8c8"/></svg>
<span class="t n" style="left:60px;top:829px;color:#b8b8b8;font-size:11.500px;transform:scaleX(.75)">フリルビキニ</span>
<svg class="a" style="left:58px;top:848px" width="13" height="11" viewBox="0 0 13 11"><path d="M0 1h5l1 1.500h7V11H0z" fill="#c8c8c8"/></svg>
<span class="t" style="left:74px;top:845px;color:#c4c4c4">FBX</span>
<svg class="a" style="left:58px;top:864px" width="13" height="11" viewBox="0 0 13 11"><path d="M0 1h5l1 1.500h7V11H0z" fill="#c8c8c8"/></svg>
<span class="t" style="left:74px;top:861px;color:#b8b8b8">Matcap</span>
<svg class="a" style="left:45px;top:880px" width="9" height="8" viewBox="0 0 9 8"><path d="M0 0h9L4.500 8z" fill="#666"/></svg>
<svg class="a" style="left:58px;top:879px" width="14" height="11" viewBox="0 0 14 11"><path d="M.5 10V.5h4l1 1.500H11v2M.5 10l2.500-6h10L10.500 10z" fill="#333" stroke="#c8c8c8"/></svg>
<span class="t" style="left:74px;top:877px;color:#b8b8b8">Materials</span>
<svg class="a" style="left:72px;top:895px" width="13" height="27" viewBox="0 0 13 27"><path d="M0 1h5l1 1.500h7V11H0zM0 16h5l1 1.500h7V26H0z" fill="#c8c8c8"/></svg>
<span class="t n" style="left:87px;top:892px;color:#b8b8b8;font-size:11.500px;transform:scaleX(.72)">フリル</span>
<span class="t" style="left:88px;top:908px;color:#b8b8b8;font-size:11.500px">水着</span>
<svg class="a" style="left:58px;top:926px" width="13" height="11" viewBox="0 0 13 11"><path d="M0 1h5l1 1.500h7V11H0z" fill="#c8c8c8"/></svg>
<span class="t" style="left:74px;top:924px;color:#b8b8b8">Texture</span>
<div style="left:0;top:709px;width:178px;height:117px;background:#000;border-radius:16px"></div>
<div style="left:0;top:941px;width:178px;height:59px;background:#000;border-radius:16px"></div>
<!-- asset panel -->
<div style="left:203px;top:702px;width:437px;height:21px;background:#3c3c3c"></div>
<span class="t" style="left:207px;top:703px;color:#a8a8a8">Assets</span>
<span class="t" style="left:249px;top:703px;color:#909090">&gt;</span>
<span class="t n" style="left:260px;top:703px;color:#a8a8a8;font-size:11.500px;transform:scaleX(.845)">あんじゅのお店</span>
<span class="t" style="left:335px;top:703px;color:#909090">&gt;</span>
<span class="t n" style="left:346px;top:703px;color:#a8a8a8;font-size:11.500px;transform:scaleX(.74)">フリルビキニ</span>
<span class="t" style="left:403px;top:703px;color:#909090">&gt;</span>
<span class="t" style="left:414px;top:703px;color:#c4c4c4;font-weight:bold">FBX</span>
<div style="left:220px;top:733px;width:58px;height:59px;background:#474c57"></div>
<svg class="a" style="left:232px;top:742px" width="32" height="44" viewBox="0 0 32 44"><path d="M13 3l3 6 5 4c2 2 3 4 2 5l-7 2c-2 0-5-1-4-3 3-2 3-5 2-8z" fill="#7dbfe9"/><path d="M3 34c2-5 9-9 15-9s10 3 11 8c-2 5-7 8-13 8-5 0-11-2-13-7z" fill="#48aef0"/><path d="M11 32c3-3 8-3 11-1-3 3-8 3-11 1z" fill="#474c57"/></svg>
<div style="left:272px;top:754px;width:16px;height:16px;border-radius:50%;background:#d0d0d0;box-shadow:0 1px 3px rgba(0,0,0,.6)"></div>
<svg class="a" style="left:276px;top:757px" width="10" height="10" viewBox="0 0 10 10"><path d="M1 0l8 5-8 5z" fill="#333"/></svg>
<div style="left:212px;top:795px;width:74px;height:14px;background:#2c5d87;border-radius:3px"></div>
<div style="left:216px;top:800px;width:5px;height:5px;border-radius:50%;background:#8fd2f8"></div>
<span class="t n" style="left:222px;top:794px;color:#d2dde8;font-size:10px;transform:scaleX(.8)">しなの&nbsp; ビキニ...</span>
<!-- bottom path -->
<div style="left:203px;top:955px;width:437px;height:20px;background:#3c3c3c"></div>
<svg class="a" style="left:206px;top:957px" width="14" height="15" viewBox="0 0 14 15"><path d="M7 1l6.500 3.500v7L7 15 .5 11.500v-7z" fill="#7fc4ee"/><path d="M.5 4.500v7L7 15V8z" fill="#9ad"/><path d="M.5 4.500L7 8l6.500-3.500M7 8v7" stroke="#333" fill="none"/></svg>
<span class="t" style="left:223px;top:957px;color:#a8a8a8">Assets/</span>
<span class="t n" style="left:263px;top:957px;color:#a8a8a8;font-size:11px;transform:scaleX(.87)">あんじゅのお店/</span>
<span class="t n" style="left:334px;top:957px;color:#a8a8a8;font-size:11px;transform:scaleX(.76)">フリルビキニ</span>
<span class="t" style="left:385px;top:957px;color:#a8a8a8">/FBX/</span>
<span class="t n" style="left:415px;top:957px;color:#a8a8a8;font-size:11px;transform:scaleX(.85)">しなの</span>
<span class="t n" style="left:452px;top:957px;color:#a8a8a8;font-size:11px;transform:scaleX(.8)">ビキニ</span>
<span class="t" style="left:480px;top:957px;color:#a8a8a8;font-size:10px;width:18px;overflow:hidden;letter-spacing:-1px">フリル</span>
<div style="left:570px;top:964px;width:54px;height:1px;background:#777"></div>
<div style="left:597px;top:960px;width:10px;height:10px;border-radius:50%;background:#a8a8a8"></div>

<!-- divider lines -->
<div style="left:299px;top:75px;width:2px;height:585px;background:#191919"></div>
<div style="left:640px;top:75px;width:2px;height:900px;background:#191919"></div>
<div style="left:0;top:660px;width:640px;height:2px;background:#191919"></div>

<!-- status bar -->
<div style="left:0;top:975px;width:1000px;height:21px;background:#191919"></div>
<div style="left:0;top:996px;width:1000px;height:4px;background:linear-gradient(90deg,#6f5a1c,#5c4a14 40%,#6c5518)"></div>
<span class="t" style="left:178px;top:978px;color:#d0a32c;font-size:12px;letter-spacing:.08px;width:322px;overflow:hidden">s/jp.lilxyzw.liltoon/Shader/lts_trans.shader is in package lilToon</span>
<svg class="a" style="left:898px;top:976px" width="100" height="20" viewBox="0 0 100 20"><g fill="#c8c8c8"><path d="M7 4h8v5H7zM7 10h8l-1 6H8z"/><path d="M3 3l16 14" stroke="#191919" stroke-width="3"/><path d="M4 3l15 14" stroke="#c8c8c8" stroke-width="1.300"/></g><g fill="none" stroke="#c8c8c8" stroke-width="1.500"><ellipse cx="43" cy="5.500" rx="6.500" ry="2.800"/><path d="M36.500 5.500v8c0 2 3 3 6.500 3s6.500-1 6.500-3M36.500 10c0 2 3 3 6.500 3s6.500-1 6.500-3"/><circle cx="65" cy="10" r="6.500"/><path d="M58 3l14 14M62 10h6"/></g><circle cx="88" cy="10" r="7" fill="none" stroke="#d0d0d0" stroke-width="1.300"/><path d="M84.500 10l2.500 2.500 4.500-5" fill="none" stroke="#d0d0d0" stroke-width="1.300"/></svg>

<!-- annotations -->
<svg class="a" style="left:810px;top:420px" width="60" height="80" viewBox="0 0 60 80"><path d="M9 28C15 18 20 11 25 6c8 6 16 14 24 23M25 6c-2 22-1 50 4 68" fill="none" stroke="#ffe070" stroke-width="5.500" stroke-linecap="round" stroke-linejoin="round"/></svg>
<span class="ann" style="left:493px;top:499px;font-size:36px">④</span>
<span class="ann" style="left:532px;top:499px;font-size:30px;letter-spacing:5px">ここに</span>
<span class="ann" style="left:635px;top:499px;font-size:32px;letter-spacing:2px">現在の</span>
<span class="ann" style="left:742px;top:501px;font-size:20px;letter-spacing:-1.500px">カラー</span>
<span class="ann" style="left:796px;top:499px;font-size:30px;letter-spacing:3px">が表示</span>
<span class="ann" style="left:897px;top:499px;font-size:30px;letter-spacing:5px">される</span>
<span class="ann" style="left:176px;top:837px;font-size:38px">③</span>
<span class="ann" style="left:219px;top:837px;font-size:28px;letter-spacing:3.500px">FBX</span>
<span class="ann" style="left:283px;top:839px;font-size:21px;letter-spacing:1px">フォルダ</span>
<span class="ann" style="left:382px;top:837px;font-size:32px">内の</span>
<span class="ann" style="left:457px;top:837px;font-size:27px;letter-spacing:2.500px">FBX</span>
<span class="ann" style="left:523px;top:837px;font-size:32px">を</span>
<span class="ann" style="left:556px;top:839px;font-size:21px;letter-spacing:-1px">クリック</span>
</div></body></html>
